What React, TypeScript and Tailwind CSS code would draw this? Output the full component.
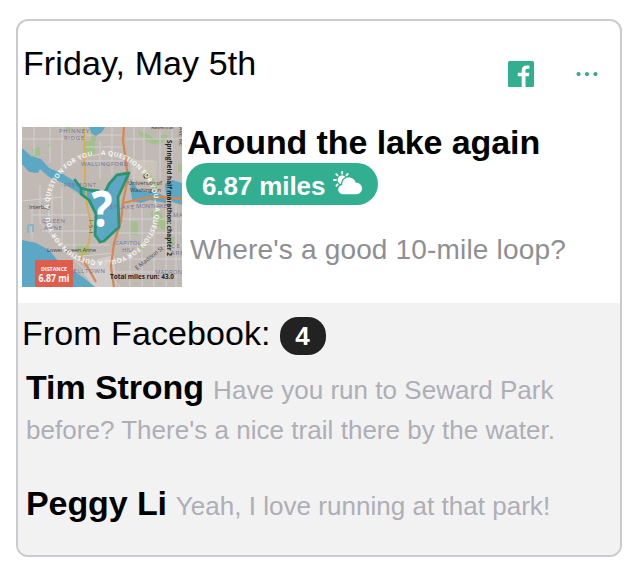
import React from "react";
import { IoIosMore, IoIosPartlySunny } from "react-icons/io";

const roads = [
  "M0 12H62", "M12 0V28", "M28 0V36", "M0 74L40 70", "M40 0V46", "M64 8H101", "M63 20H101", "M63 34H101",
  "M78 14V52", "M90 0V48", "M104 12H160", "M104 34H132", "M112 0V60", "M122 0V50", "M138 4V52", "M150 0V52",
  "M10 76V112", "M18 58V96L62 142", "M30 66V108", "M40 60V116", "M52 66V126", "M10 88H66", "M20 104H68",
  "M36 118H88", "M50 130L92 126", "M60 145L92 134", "M68 152L90 145", "M78 138L98 160", "M84 132V160",
  "M100 92H160", "M96 106H160", "M94 118H160", "M92 132H160", "M92 145H160", "M108 80V160", "M120 76V160",
  "M132 82V160", "M144 78V160", "M154 78V160",
];

function Place({ x, y, w, children }: { x: number; y: number; w: number; children: string }) {
  return (
    <text x={x} y={y} fontSize="6" fill="#72749a" textLength={w}>
      {children}
    </text>
  );
}

function FacebookIcon() {
  return (
    <svg viewBox="0 0 26 26" className="size-[26px]">
      <rect width="26" height="26" rx="1.5" fill="currentColor" />
      <path
        d="M13.700 26V15.200H9.800V11.700H13.700V9.300C13.700 6.200 15.600 4.400 18.600 4.400C19.900 4.400 21 4.500 21.400 4.600V7.800H19.400C17.900 7.800 17.500 8.500 17.500 9.600V11.700H21.400L20.900 15.200H17.500V26Z"
        fill="#fff"
      />
    </svg>
  );
}

function RouteMap() {
  return (
    <svg viewBox="0 0 160 160" className="size-40 shrink-0 font-['Open_Sans',sans-serif]">
      <defs>
        <path id="ring" d="M27 82A53 53 0 0 1 133 80A53 53 0 0 1 27 82" />
      </defs>
      <rect width="160" height="160" fill="#c1bab4" />
      <path d="M76 132L92 128L94 160H72L60 144Z" fill="#cfcccb" />
      <path d="M108 34L135 34L134 56L110 52Z" fill="#cbc3b8" />
      <g fill="#9fc287" opacity="0.85">
        <path d="M62 14H73V28H62ZM10 22L18 20V29H11ZM26 17H29V20H26ZM115 4L124 6L136 14L134 18L122 13ZM133 13L142 7L146 9L138 18Z" />
        <path d="M54 118L67 117L68 128H56ZM107 94L116 95V108H108ZM128 86L136 82L146 98L142 104L134 98ZM44 0H49V3H44ZM156 38L160 36V45H156ZM146 111L152 109L153 119H147ZM118 116H122V123H118ZM69 0H74V14H69ZM126 44L134 56L136 66L131 62Z" />
      </g>
      <g stroke="#d2d0d2" strokeWidth="1" fill="none">
        {roads.map((d) => (
          <path key={d} d={d} />
        ))}
      </g>
      <g fill="#5ba7c4">
        <path d="M0 21L9 29L19 32L27 41L41 47L52 54L60 62L72 64L83 65L88 56L97 49L106 47L96 69L97 98L82 113L76 113L73 106L74 87L67 75L58 67L41 56L27 50L18 42L16 46L7 45L0 37Z" />
        <path d="M0 113L14 116L27 123L37 135L51 143L62 151L73 160H0Z" />
        <path d="M67 0H83L80 5L74 9L70 7Z" />
        <path d="M108 52L113 58L116 63L136 66L144 70V76L128 73L119 76L110 74L109 64ZM143 57L150 53L160 56V78L151 75L144 68Z" />
      </g>
      <path d="M6 98V106M6 98H11V105" stroke="#85b6c7" strokeWidth="2" fill="none" />
      <path d="M62 0L63 53L65 78L69 97L67 116L59 130" stroke="#d9ad45" strokeWidth="1.7" fill="none" />
      <path d="M59 130L66 141L74 155M102 0L101 13L104 36L106 50L101 75L99 94L92 116L89 140L92 160M101 76L124 71L142 70L160 72" stroke="#d88652" strokeWidth="2.3" fill="none" />
      <Place x={37} y={6} w={30}>PHINNEY</Place>
      <Place x={42} y={13} w={20}>RIDGE</Place>
      <Place x={59} y={39} w={47}>WALLINGFORD</Place>
      <Place x={42} y={60} w={32}>FREMONT</Place>
      <Place x={20} y={96} w={23}>QUEEN</Place>
      <Place x={22} y={103} w={18}>ANNE</Place>
      <Place x={79} y={82} w={33}>EASTLAKE</Place>
      <Place x={114} y={81} w={31}>MONTLAKE</Place>
      <Place x={93} y={118} w={26}>CAPITOL</Place>
      <Place x={100} y={125} w={13}>HILL</Place>
      <Place x={47} y={146} w={36}>BELLTOWN</Place>
      <Place x={133} y={147} w={31}>MADRONA</Place>
      <Place x={151} y={90} w={16}>MADI</Place>
      <Place x={149} y={121} w={20}>CENT</Place>
      <Place x={149} y={128} w={17}>AREA</Place>
      <g fontSize="5.8" fill="#424244">
        <text x="7" y="82" textLength="21">Interbay</text>
        <text x="25" y="125" textLength="49">Lower Queen Anne</text>
        <text x="106" y="58" textLength="34">University of</text>
        <text x="108" y="65" textLength="31">Washington</text>
        <text x="129" y="2" textLength="22">Ravenna</text>
        <text transform="translate(115 143)rotate(-38)" textLength="34">E Madison St</text>
        <text transform="translate(157 -14)rotate(90)">35th AVE NE</text>
        <text transform="translate(67 93)rotate(90)" textLength="13">I-5-I</text>
      </g>
      <path d="M53 53L59 61L66 63L77 64M59 61L59 67L67 73L74 87L73 108L78 115L82 114L97 100L96 70L107 46L95 48L87 57L83 65" fill="none" stroke="#299574" strokeWidth="2.8" strokeLinejoin="round" strokeLinecap="round" />
      <circle cx="124" cy="49" r="2.6" fill="#54451d" />
      <circle cx="124" cy="49" r="1.2" fill="#d6b540" />
      <text fontSize="6.5" fontWeight="700" fill="#f5f4f1">
        <textPath href="#ring" textLength="331" lengthAdjust="spacing">
          A QUESTION FOR YOU... A QUESTION FOR YOU... A QUESTION FOR YOU... A QUESTION FOR YOU...
        </textPath>
      </text>
      <text x="69.5" y="99.500" fontSize="50" fontWeight="700" fill="#fff" textLength="21" lengthAdjust="spacingAndGlyphs">?</text>
      <text transform="translate(145 13)rotate(90)" fontSize="6.4" fontWeight="700" fill="#222" textLength="116" lengthAdjust="spacingAndGlyphs">
        Springfield half marathon: chapter 2
      </text>
      <text x="88" y="152" fontSize="6.6" fontWeight="700" fill="#222" textLength="64" lengthAdjust="spacingAndGlyphs">
        Total miles run: 43.0
      </text>
      <rect x="13" y="133" width="38" height="27" fill="#df5d4c" />
      <text x="32" y="144" fontSize="5.6" fontWeight="700" fill="#fff" textAnchor="middle" textLength="26" lengthAdjust="spacingAndGlyphs">DISTANCE</text>
      <text x="32" y="155" fontSize="10.5" fontWeight="700" fill="#fff" textAnchor="middle" textLength="31" lengthAdjust="spacingAndGlyphs">6.87 mi</text>
    </svg>
  );
}

function Comment({ name, children }: { name: string; children: React.ReactNode }) {
  return (
    <p className="pl-2 text-[26px] leading-10 tracking-[0.03px] text-[#aeaeb6]">
      <strong className="mr-[2px] text-[34px] leading-10 font-bold tracking-[-0.1px] text-black">{name}</strong> {children}
    </p>
  );
}

export default function App() {
  return (
    <main className="h-[582px] w-[630px] bg-white pt-[19px] pl-4 font-['Liberation_Sans',Arial,sans-serif] text-black">
      <article className="flex h-[538px] w-[606px] flex-col overflow-hidden rounded-xl border-2 border-[#cbcad1]">
        <header className="flex h-[106px] items-start pt-[22px] pl-[5px]">
          <h1 className="text-[34px] leading-10 tracking-[0.1px]">Friday, May 5th</h1>
          <div className="mt-[17px] mr-[19px] ml-auto flex items-center gap-[39px] text-[#32af90]">
            <FacebookIcon />
            <IoIosMore size={28} />
          </div>
        </header>
        <section className="flex h-44 shrink-0 pl-1">
          <RouteMap />
          <div className="ml-1">
            <h2 className="-mt-px ml-px text-[34px] leading-8 font-bold tracking-[-0.1px]">Around the lake again</h2>
            <div className="mt-[5px] flex h-[42px] w-48 items-center rounded-full bg-[#32af90] pt-[5px] pl-4 text-[26px] leading-[39px] font-bold tracking-[-0.1px] text-white">
              6.87 miles
              <IoIosPartlySunny size={31} className="-mt-2 ml-[7px]" />
            </div>
            <p className="mt-[25px] ml-1 text-[28px] leading-10 tracking-[0.17px] text-[#8e8e93]">Where's a good 10-mile loop?</p>
          </div>
        </section>
        <section className="flex-1 bg-[#f2f2f2]">
          <div className="flex h-[64px] items-start pt-[10px] pl-1">
            <h2 className="text-[34px] leading-10 tracking-[0.07px]">From Facebook:</h2>
            <span className="mt-1 ml-[9px] flex h-[38px] w-[46px] items-center justify-center rounded-[18px] bg-[#222] text-[26px] font-bold text-white">4</span>
          </div>
          <div className="flex flex-col gap-[33px]">
            <Comment name="Tim Strong">
              Have you run to Seward Park
              <br />
              before? There's a nice trail there by the water.
            </Comment>
            <Comment name="Peggy Li">Yeah, I love running at that park!</Comment>
          </div>
        </section>
      </article>
    </main>
  );
}
